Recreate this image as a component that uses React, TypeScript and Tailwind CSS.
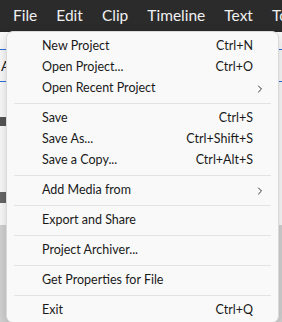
import { ChevronRight } from "lucide-react"

type Item = { label: string; shortcut?: string; sub?: boolean }

const GROUPS: Item[][] = [
  [
    { label: "New Project", shortcut: "Ctrl+N" },
    { label: "Open Project...", shortcut: "Ctrl+O" },
    { label: "Open Recent Project", sub: true },
  ],
  [
    { label: "Save", shortcut: "Ctrl+S" },
    { label: "Save As...", shortcut: "Ctrl+Shift+S" },
    { label: "Save a Copy...", shortcut: "Ctrl+Alt+S" },
  ],
  [{ label: "Add Media from", sub: true }],
  [{ label: "Export and Share" }],
  [{ label: "Project Archiver..." }],
  [{ label: "Get Properties for File" }],
  [{ label: "Exit", shortcut: "Ctrl+Q" }],
]

const MENUS = ["File", "Edit", "Clip", "Timeline", "Text", "Tools"]

export default function App() {
  return (
    <div
      className="relative w-[282px] h-[322px] overflow-hidden bg-[#f3f3f3]"
      style={{ fontFamily: "'Segoe UI', Lato, 'Open Sans', sans-serif" }}
    >
      {/* menu bar */}
      <div className="flex h-[32px] items-center gap-[19px] bg-[#2b2b2b] pl-[13px] text-[15.5px] text-[#f0f0f0] whitespace-nowrap">
        {MENUS.map((m) => (
          <span key={m}>{m}</span>
        ))}
      </div>

      {/* app content behind the menu */}
      <div className="flex h-[290px] flex-col">
        <div className="h-[193px] bg-[#fafafa]">
          <div className="mt-[17px] h-[33px] border-y border-[#2a6fdb] pl-[1px] text-[14px] leading-[31px] text-[#222]">A</div>
          <div className="mt-[35px] h-[9px] w-[6px] bg-[#555]" />
          <div className="mt-[66px] h-[11px] w-[6px] bg-[#666]" />
        </div>
        <div className="flex-1 bg-[#d2d2d2]" />
      </div>

      {/* dropdown */}
      <div className="absolute left-[6px] top-[31px] w-[273px] rounded-[7px] border border-[#dadada] bg-[#f9f9f9] pb-[1px] pt-[4px] shadow-[0_4px_12px_rgba(0,0,0,0.18)] text-[12.5px] text-[#1a1a1a]">
        {GROUPS.map((group, gi) => (
          <div key={gi}>
            {gi > 0 && <div className="mx-[7px] my-[4px] h-px bg-[#e3e3e3]" />}
            {group.map((it) => (
              <div key={it.label} className="flex h-[21px] items-center pl-[35px] pr-[12px]">
                <span className="flex-1">{it.label}</span>
                {it.shortcut && <span className="pr-[13px]">{it.shortcut}</span>}
                {it.sub && <ChevronRight className="h-[12px] w-[12px] text-[#333]" strokeWidth={2} />}
              </div>
            ))}
          </div>
        ))}
      </div>
    </div>
  )
}
